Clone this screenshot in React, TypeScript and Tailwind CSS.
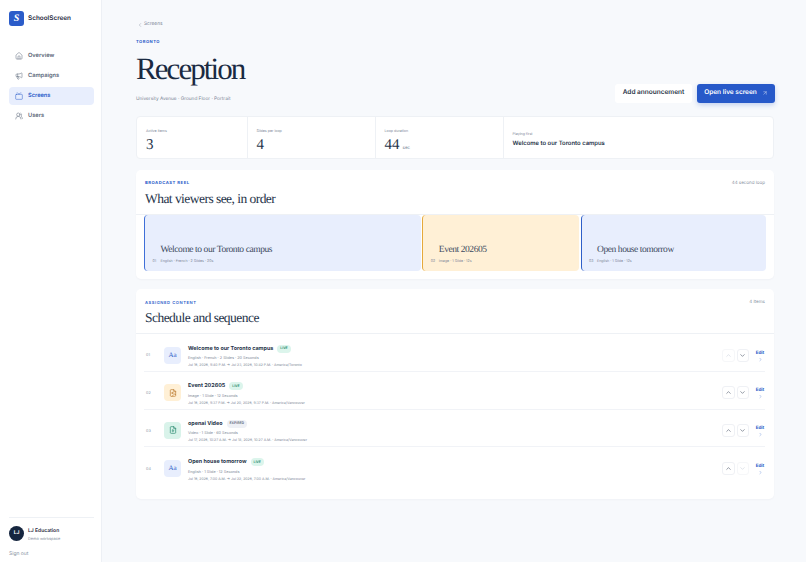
import React from 'react';
import { ArrowUpRight, ChevronDown, ChevronLeft, ChevronRight, ChevronUp, FileImage, FileVideo, Home, Megaphone, Tv, UsersRound } from 'lucide-react';

const serif = "font-['Liberation_Serif',serif]";

const nav = [
  { label: 'Overview', icon: Home },
  { label: 'Campaigns', icon: Megaphone },
  { label: 'Screens', icon: Tv, active: true },
  { label: 'Users', icon: UsersRound },
];

const stats = [
  { label: 'Active items', value: '3', width: 'w-[110.5px]' },
  { label: 'Slides per loop', value: '4', width: 'w-[128px]' },
  { label: 'Loop duration', value: '44', unit: 'sec', width: 'w-[128px]' },
];

const reel = [
  { title: 'Welcome to our Toronto campus', meta: 'English · French · 2 Slides · 20s', box: 'w-[276.5px] bg-[#e8eefd] border-[#3f6fd8]', num: '01' },
  { title: 'Event 202605', meta: 'Image · 1 Slide · 12s', box: 'w-[156.5px] bg-[#fff0d6] border-[#e5a93c]', num: '02' },
  { title: 'Open house tomorrow', meta: 'English · 1 Slide · 12s', box: 'w-[185px] bg-[#e8eefd] border-[#2f5fc8]', num: '03' },
];

const rows = [
  { num: '01', title: 'Welcome to our Toronto campus', status: 'LIVE', kind: 'text', meta: 'English · French · 2 Slides · 20 Seconds', dates: 'Jul 16, 2026, 9:40 P.M. → Jul 23, 2026, 10:42 P.M. · America/Toronto', upOff: true },
  { num: '02', title: 'Event 202605', status: 'LIVE', kind: 'image', meta: 'Image · 1 Slide · 12 Seconds', dates: 'Jul 16, 2026, 9:37 P.M. → Jul 20, 2026, 9:37 P.M. · America/Vancouver' },
  { num: '03', title: 'openai Video', status: 'EXPIRED', kind: 'video', meta: 'Video · 1 Slide · 60 Seconds', dates: 'Jul 17, 2026, 10:27 A.M. → Jul 18, 2026, 10:27 A.M. · America/Vancouver' },
  { num: '04', title: 'Open house tomorrow', status: 'LIVE', kind: 'text', meta: 'English · 1 Slide · 12 Seconds', dates: 'Jul 16, 2026, 7:00 A.M. → Jul 22, 2026, 7:00 A.M. · America/Vancouver', downOff: true },
];

function RowIcon({ kind }: { kind: string }) {
  if (kind === 'image') {
    return (
      <div className="flex h-[17px] w-[17px] items-center justify-center rounded-[4px] bg-[#fff0d6] text-[#b9772a]">
        <FileImage size={8} strokeWidth={2} />
      </div>
    );
  }
  if (kind === 'video') {
    return (
      <div className="flex h-[17px] w-[17px] items-center justify-center rounded-[4px] bg-[#d9f3ea] text-[#23856a]">
        <FileVideo size={8} strokeWidth={2} />
      </div>
    );
  }
  return (
    <div className={`flex h-[17px] w-[17px] items-center justify-center rounded-[4px] bg-[#e8eefd] text-[7px] text-[#2f5fc8] ${serif}`}>Aa</div>
  );
}

function MoveButton({ up, off }: { up?: boolean; off?: boolean }) {
  const Icon = up ? ChevronUp : ChevronDown;
  return (
    <div className={`flex h-[13px] w-[12.5px] items-center justify-center rounded-[3px] border ${off ? 'border-[#f6f7f9] text-[#cbd2dc]' : 'border-[#eff1f5] text-[#4a5568]'}`}>
      <Icon size={7} strokeWidth={2} />
    </div>
  );
}

export default function App() {
  return (
    <div className="flex h-[562px] w-[806px] overflow-hidden bg-[#f7f9fc] font-['Inter',sans-serif] antialiased [text-rendering:geometricPrecision]">
      {/* Sidebar */}
      <aside className="flex w-[102px] shrink-0 flex-col border-r border-[#edf0f5] bg-white pl-[9px] pr-[7px] pt-[11px]">
        <div className="flex items-center gap-[4px]">
          <div className={`flex h-[15px] w-[15px] items-center justify-center rounded-[3px] bg-[#2b5cc9] text-[10px] font-bold italic text-white ${serif}`}>S</div>
          <span className="text-[6.4px] font-semibold text-[#1f2a3d]">SchoolScreen</span>
        </div>
        <nav className="mt-[21px] flex flex-col gap-[2px]">
          {nav.map((item) => (
            <div
              key={item.label}
              className={`flex h-[18px] items-center gap-[5px] rounded-[4px] pl-[6px] text-[5.7px] font-semibold ${item.active ? 'bg-[#e8eefd] text-[#2b5cc9]' : 'text-[#5b6678]'}`}
            >
              <item.icon size={8} strokeWidth={1.5} />
              <span>{item.label}</span>
            </div>
          ))}
        </nav>
        <div className="mt-auto border-t border-[#eef1f5] pt-[8px]">
          <div className="flex items-center gap-[4px]">
            <div className="flex h-[15px] w-[15px] items-center justify-center rounded-full bg-[#16263f] text-[5px] font-bold text-white">LJ</div>
            <div className="pt-[2px]">
              <div className="text-[5px] font-semibold leading-[7px] text-[#1f2a3d]">LJ Education</div>
              <div className="text-[3.9px] leading-[7px] text-[#8a94a3]">Demo workspace</div>
            </div>
          </div>
          <div className="mb-[4px] mt-[9px] text-[5px] text-[#8a94a3]">Sign out</div>
        </div>
      </aside>

      {/* Main */}
      <main className="w-[704px] pl-[34px] pr-[32px] pt-[20px]">
        <div className="mt-[2px] flex h-[6px] items-center gap-[1.5px] pl-[0.5px] text-[4.8px] text-[#7c8696]">
          <ChevronLeft size={6} strokeWidth={1.5} />
          <span>Screens</span>
        </div>
        <div className="mt-[11px] text-[4.1px] font-bold leading-[6px] tracking-[0.12em] text-[#2b5cc9]">TORONTO</div>

        <div className="flex items-end justify-between">
          <div>
            <h1 className={`mt-[4.5px] text-[31px] leading-[38px] tracking-[-0.062em] text-[#1a2a42] ${serif}`}>Reception</h1>
            <div className="mt-[7px] text-[4.75px] leading-[8px] text-[#7c8696]">University Avenue · Ground Floor · Portrait</div>
          </div>
          <div className="mr-[-1px] flex items-center gap-[5px]">
            <div className="flex h-[19px] w-[77px] items-center justify-center rounded-[3px] bg-white text-[6.5px] font-semibold text-[#2a3548]">Add announcement</div>
            <div className="flex h-[19px] w-[78px] items-center justify-center gap-[5px] rounded-[3px] bg-[#2759c9] text-[6.5px] font-semibold text-white shadow-[0_2px_5px_rgba(39,89,201,0.25)]">
              Open live screen
              <ArrowUpRight size={6} strokeWidth={1.5} />
            </div>
          </div>
        </div>

        {/* Stats */}
        <div className="mt-[13.5px] flex h-[43px] rounded-[4px] border border-[#eef1f5] bg-white">
          {stats.map((s) => (
            <div key={s.label} className={`${s.width} border-r border-[#eef1f5] pl-[9px] pt-[11px]`}>
              <div className="text-[3.6px] leading-[6px] text-[#7c8696]">{s.label}</div>
              <div className={`mt-[2px] flex items-baseline gap-[3px] text-[15px] leading-[18px] text-[#26344a] ${serif}`}>
                {s.value}
                {s.unit && <span className="font-['Inter',sans-serif] text-[4.5px] text-[#7c8696]">{s.unit}</span>}
              </div>
            </div>
          ))}
          <div className="flex-1 pl-[9px] pt-[13.5px]">
            <div className="text-[3.6px] leading-[6px] text-[#7c8696]">Playing first</div>
            <div className="mt-[3px] text-[5.9px] font-semibold leading-[8px] text-[#26344a]">Welcome to our Toronto campus</div>
          </div>
        </div>

        {/* Broadcast reel */}
        <section className="mt-[10.5px] h-[109px] rounded-[5px] bg-white shadow-[0_1px_2px_rgba(20,30,50,0.03)]">
          <div className="flex h-[45px] justify-between border-b border-[#eef1f5] px-[9px] pt-[10px]">
            <div>
              <div className="mt-[1px] text-[4.2px] font-bold leading-[5px] tracking-[0.12em] text-[#2b5cc9]">BROADCAST REEL</div>
              <h2 className={`mt-[4px] text-[13.5px] leading-[17px] tracking-[-0.04em] text-[#26344a] ${serif}`}>What viewers see, in order</h2>
            </div>
            <div className="pt-[1px] text-[4.5px] leading-[5px] text-[#8a94a3]">44 second loop</div>
          </div>
          <div className="flex gap-[1.75px] pl-[8px]">
            {reel.map((r) => (
              <div key={r.num} className={`${r.box} flex h-[56px] flex-col justify-end rounded-[4px] border-l-[1.5px] pb-[7px] pl-[7.5px]`}>
                <div className={`pl-[8px] text-[9.5px] leading-[12px] tracking-[-0.045em] text-[#3c4a60] ${serif}`}>{r.title}</div>
                <div className="mt-[3px] flex items-center text-[3.6px] leading-[5px] text-[#7c8696]">
                  <span className="w-[8px]">{r.num}</span>
                  <span>{r.meta}</span>
                </div>
              </div>
            ))}
          </div>
        </section>

        {/* Assigned content */}
        <section className="mt-[10px] h-[210px] rounded-[5px] bg-white shadow-[0_1px_2px_rgba(20,30,50,0.03)]">
          <div className="flex h-[45px] justify-between border-b border-[#eef1f5] px-[9px] pt-[10px]">
            <div>
              <div className="mt-[1px] text-[4.1px] font-semibold leading-[5px] tracking-[0.14em] text-[#2b5cc9]">ASSIGNED CONTENT</div>
              <h2 className={`mt-[4px] text-[13.5px] leading-[18px] tracking-[-0.04em] text-[#26344a] ${serif}`}>Schedule and sequence</h2>
            </div>
            <div className="pt-[1px] text-[4.5px] leading-[5px] text-[#8a94a3]">4 items</div>
          </div>
          <div className="ml-[8px] mr-[9px] mt-[1px]">
            {rows.map((row, i) => (
              <div key={row.num} className={`flex h-[37.6px] items-center pt-[5px] ${i < 3 ? 'border-b border-[#f1f3f7]' : ''}`}>
                <div className="w-[20px] pl-[2px] text-[3.8px] text-[#8a94a3]">{row.num}</div>
                <RowIcon kind={row.kind} />
                <div className="ml-[7px] flex-1 pt-[3.5px]">
                  <div className="flex items-center gap-[4px]">
                    <span className="text-[5.4px] font-bold leading-[8px] text-[#26344a]">{row.title}</span>
                    <span className={`rounded-full px-[3px] py-[1.5px] text-[3.4px] font-semibold leading-[5px] ${row.status === 'LIVE' ? 'bg-[#dcf5ec] text-[#23856a]' : 'bg-[#eef0f5] text-[#5b6678]'}`}>{row.status}</span>
                  </div>
                  <div className="mt-[1.5px] text-[3.8px] leading-[7px] text-[#7c8696]">{row.meta}</div>
                  <div className="mt-[1px] text-[3.5px] leading-[7px] text-[#7c8696]">{row.dates}</div>
                </div>
                <div className="flex items-center gap-[2px]">
                  <MoveButton up off={row.upOff} />
                  <MoveButton off={row.downOff} />
                </div>
                <div className="ml-[6px] flex w-[10px] flex-col items-center pt-[2px] text-[4.6px] font-bold leading-[6px] text-[#2b5cc9]">
                  Edit
                  <ChevronRight size={5} strokeWidth={1.5} />
                </div>
              </div>
            ))}
          </div>
        </section>
      </main>
    </div>
  );
}
